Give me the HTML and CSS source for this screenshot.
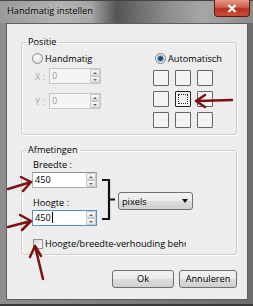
FILE: index.html
```html
<!DOCTYPE html>
<html lang="nl">
  <head>
    <meta charset="UTF-8" />
    <meta name="viewport" content="width=device-width, initial-scale=1.0" />
    <title>Handmatig instellen</title>
    <link rel="stylesheet" href="styles.css">
  </head>
  <body>
    <div class="window">
      <div class="titlebar">
        <span class="title">Handmatig instellen</span>
        <span class="close">
          <svg width="10" height="9" viewBox="0 0 10 9">
            <path d="M1.5 1 L8.5 8 M8.5 1 L1.5 8" stroke="#fff" stroke-width="2.2" />
          </svg>
        </span>
      </div>

      <div class="client">
        <fieldset class="group positie">
          <legend>Positie</legend>
          <div class="pos-cols">
            <div class="manual">
              <div class="radio-row"><span class="radio"></span>Handmatig</div>
              <div class="coord">
                <span class="coord-label">X :</span>
                <span class="spin disabled">
                  <span class="spin-value">0</span>
                  <span class="spin-btns"><span class="up"></span><span class="down"></span></span>
                </span>
              </div>
              <div class="coord">
                <span class="coord-label">Y :</span>
                <span class="spin disabled">
                  <span class="spin-value">0</span>
                  <span class="spin-btns"><span class="up"></span><span class="down"></span></span>
                </span>
              </div>
            </div>
            <div class="auto">
              <div class="radio-row"><span class="radio checked"></span>Automatisch</div>
              <div class="anchor-grid">
                <span class="cell"></span>
                <span class="cell"></span>
                <span class="cell"></span>
                <span class="cell"></span>
                <span class="cell selected"><span class="focus"></span></span>
                <span class="cell"></span>
                <span class="cell"></span>
                <span class="cell"></span>
                <span class="cell"></span>
              </div>
            </div>
          </div>
        </fieldset>

        <fieldset class="group afmetingen">
          <legend>Afmetingen</legend>
          <div class="size-row">
            <div class="size-fields">
              <div class="field-label">Breedte :</div>
              <span class="spin wide">
                <span class="spin-value">450</span>
                <span class="spin-btns"><span class="up"></span><span class="down"></span></span>
              </span>
              <div class="field-label second">Hoogte :</div>
              <span class="spin wide focused">
                <span class="spin-value">450<span class="caret"></span></span>
                <span class="spin-btns"><span class="up"></span><span class="down"></span></span>
              </span>
            </div>
            <svg class="bracket" width="14" height="42" viewBox="0 0 14 42">
              <path d="M0 1 H7 V40 H0 M7 20.5 H13" fill="none" stroke="#111" stroke-width="2.2" />
            </svg>
            <div class="select">
              <span>pixels</span>
              <svg width="6" height="4" viewBox="0 0 6 4"><path d="M0 0 H6 L3 4 Z" fill="#111" /></svg>
            </div>
          </div>
          <div class="check-row">
            <span class="checkbox"></span>Hoogte/breedte-verhouding behouden
          </div>
        </fieldset>

        <div class="buttons">
          <button class="btn ok">Ok</button>
          <button class="btn cancel">Annuleren</button>
        </div>
      </div>

      <!-- red arrows drawn over the screenshot -->
      <svg class="annotations" width="253" height="306" viewBox="0 0 253 306">
        <g fill="none" stroke="#7d1212" stroke-width="2.5" stroke-linecap="round" stroke-linejoin="round">
          <path d="M232 100 L196 101 M205 95 L196 101 L205 107" />
          <path d="M8 189 L31 182 M21 177 L31 182 L23 191" />
          <path d="M8 227 L31 221 M20 215 L31 221 L22 230" />
          <path d="M43 279 L35 246 M30 257 L35 246 L41 256" />
        </g>
      </svg>
    </div>
  </body>
</html>
```

FILE: styles.css
```css
* {
  box-sizing: border-box;
}
body {
  margin: 0;
  font-family: "Open Sans", "Noto Sans", sans-serif;
  font-size: 9.2px;
  color: #000;
  background: #777;
}
.window {
  position: relative;
  width: 253px;
  height: 306px;
  display: flex;
  flex-direction: column;
  padding: 0 5px 4px 6px;
  background: linear-gradient(90deg, #8e8e8e 0%, #7c7c7c 50%, #6c6c6c 100%);
  border-bottom: 2px solid #3a3a3a;
}

/* Title bar */
.titlebar {
  height: 23px;
  margin: 0 -5px 0 -6px;
  padding: 0 3px 0 7px;
  display: flex;
  align-items: flex-start;
  background: linear-gradient(90deg, #9a9a9a 0%, #b2b2b2 24%, #a6a6a6 36%, #555 46%, #6e6e6e 55%, #8c8c8c 66%, #a6a6a6 80%, #8c8c8c 100%);
  box-shadow: inset 0 1px 0 #444;
}
.title {
  padding-top: 4px;
  line-height: 14px;
  text-shadow: 0 0 4px rgba(255, 255, 255, 0.5);
}
.close {
  margin-left: auto;
  width: 36px;
  height: 17px;
  display: flex;
  align-items: center;
  justify-content: center;
  border: 1px solid #5a1c12;
  border-top: none;
  border-radius: 0 0 4px 4px;
  background: linear-gradient(#e49a88 0%, #d0624c 45%, #b8321e 55%, #c9503a 100%);
}

/* Client area */
.client {
  flex: 1;
  background: #ededed;
  border: 1px solid #5f5f5f;
  padding: 10px 10px 0 14px;
}
.group {
  margin: 0;
  padding: 0 0 6px;
  min-width: 0;
  border: 1px solid #cdcdcd;
  border-radius: 3px;
  box-shadow: inset 1px 1px 0 #fafafa, 1px 1px 0 #fafafa;
}
.group legend {
  margin-left: 4px;
  padding: 0 2px;
  line-height: 16px;
}

/* Positie */
.pos-cols {
  display: flex;
}
.manual {
  width: 131px;
  padding-left: 10px;
}
.radio-row {
  display: flex;
  align-items: center;
  gap: 2px;
  height: 16px;
}
.auto .radio-row {
  padding-left: 2px;
}
.radio {
  width: 11px;
  height: 11px;
  border-radius: 50%;
  border: 1px solid #8b8b8b;
  background: radial-gradient(circle at 40% 35%, #fff, #d6d6d6);
}
.radio.checked {
  border-color: #6f7f8f;
  background: radial-gradient(circle, #1c3550 0, #2f5d86 2px, #8fb0cc 3px, #f2f2f2 4px);
}
.coord {
  display: flex;
  align-items: center;
  margin-top: 2px;
  padding-left: 3px;
}
.coord + .coord {
  margin-top: 9px;
}
.coord-label {
  width: 14px;
  color: #a5a5a5;
}
.spin {
  display: flex;
  width: 52px;
  height: 16px;
  border: 1px solid #a9acb2;
  border-top-color: #8e9196;
  background: #fff;
}
.spin.disabled {
  border-color: #c8c8c8;
  background: #f5f5f5;
  color: #9a9a9a;
}
.spin.wide {
  width: 65px;
}
.spin.focused {
  border-color: #5b8fc4;
}
.spin-value {
  flex: 1;
  padding-left: 2px;
  line-height: 14px;
}
.caret {
  display: inline-block;
  width: 1px;
  height: 11px;
  margin-left: 1px;
  vertical-align: -2px;
  background: #000;
}
.spin-btns {
  width: 10px;
  display: flex;
  flex-direction: column;
}
.spin-btns span {
  flex: 1;
  display: flex;
  align-items: center;
  justify-content: center;
  border: 1px solid #c8c8c8;
  border-radius: 1px;
  background: linear-gradient(#fafafa, #e2e2e2);
}
.spin-btns .up::before {
  content: "";
  border: 2px solid transparent;
  border-top: 0;
  border-bottom-color: #666;
}
.spin-btns .down::before {
  content: "";
  border: 2px solid transparent;
  border-bottom: 0;
  border-top-color: #666;
}
.anchor-grid {
  display: grid;
  grid-template-columns: repeat(3, 16px);
  grid-auto-rows: 16px;
  gap: 5px 6px;
  margin-top: 4px;
}
.cell {
  border: 1px solid #666;
  border-radius: 1px;
  background: #f3f3f3;
}
.cell.selected {
  padding: 2px;
  border-color: #222;
}
.cell .focus {
  display: block;
  height: 100%;
  border: 1px dotted #222;
}

/* Afmetingen */
.afmetingen {
  margin-top: 7px;
  padding-bottom: 4px;
}
.size-row {
  display: flex;
  align-items: flex-start;
  padding-left: 10px;
}
.size-fields {
  width: 65px;
}
.field-label {
  padding-left: 1px;
  line-height: 14px;
}
.field-label.second {
  margin-top: 8px;
}
.bracket {
  margin: 21px 0 0 5px;
}
.select {
  margin: 34px 0 0 2px;
  width: 75px;
  height: 18px;
  padding: 0 4px 0 3px;
  display: flex;
  align-items: center;
  justify-content: space-between;
  border: 1px solid #707070;
  border-radius: 3px;
  background: linear-gradient(#f3f3f3 0%, #ebebeb 50%, #dddddd 50%, #cfcfcf 100%);
}
.check-row {
  display: flex;
  align-items: center;
  gap: 2px;
  width: 153px;
  height: 13px;
  margin: 11px 0 0 11px;
  white-space: nowrap;
  overflow: hidden;
}
.checkbox {
  flex: none;
  width: 10px;
  height: 10px;
  border: 1px solid #8e8f8f;
  background: linear-gradient(135deg, #d8d8d8, #fafafa);
}

/* Buttons */
.buttons {
  display: flex;
  justify-content: flex-end;
  gap: 5px;
  margin-top: 15px;
}
.btn {
  height: 18px;
  padding: 0;
  font: inherit;
  line-height: 16px;
  color: #000;
  border: 1px solid #707070;
  border-radius: 3px;
  background: linear-gradient(#f2f2f2 0%, #ebebeb 50%, #dddddd 50%, #cfcfcf 100%);
}
.btn.ok {
  width: 62px;
}
.btn.cancel {
  width: 58px;
}

.annotations {
  position: absolute;
  top: 0;
  left: 0;
  pointer-events: none;
}
```
